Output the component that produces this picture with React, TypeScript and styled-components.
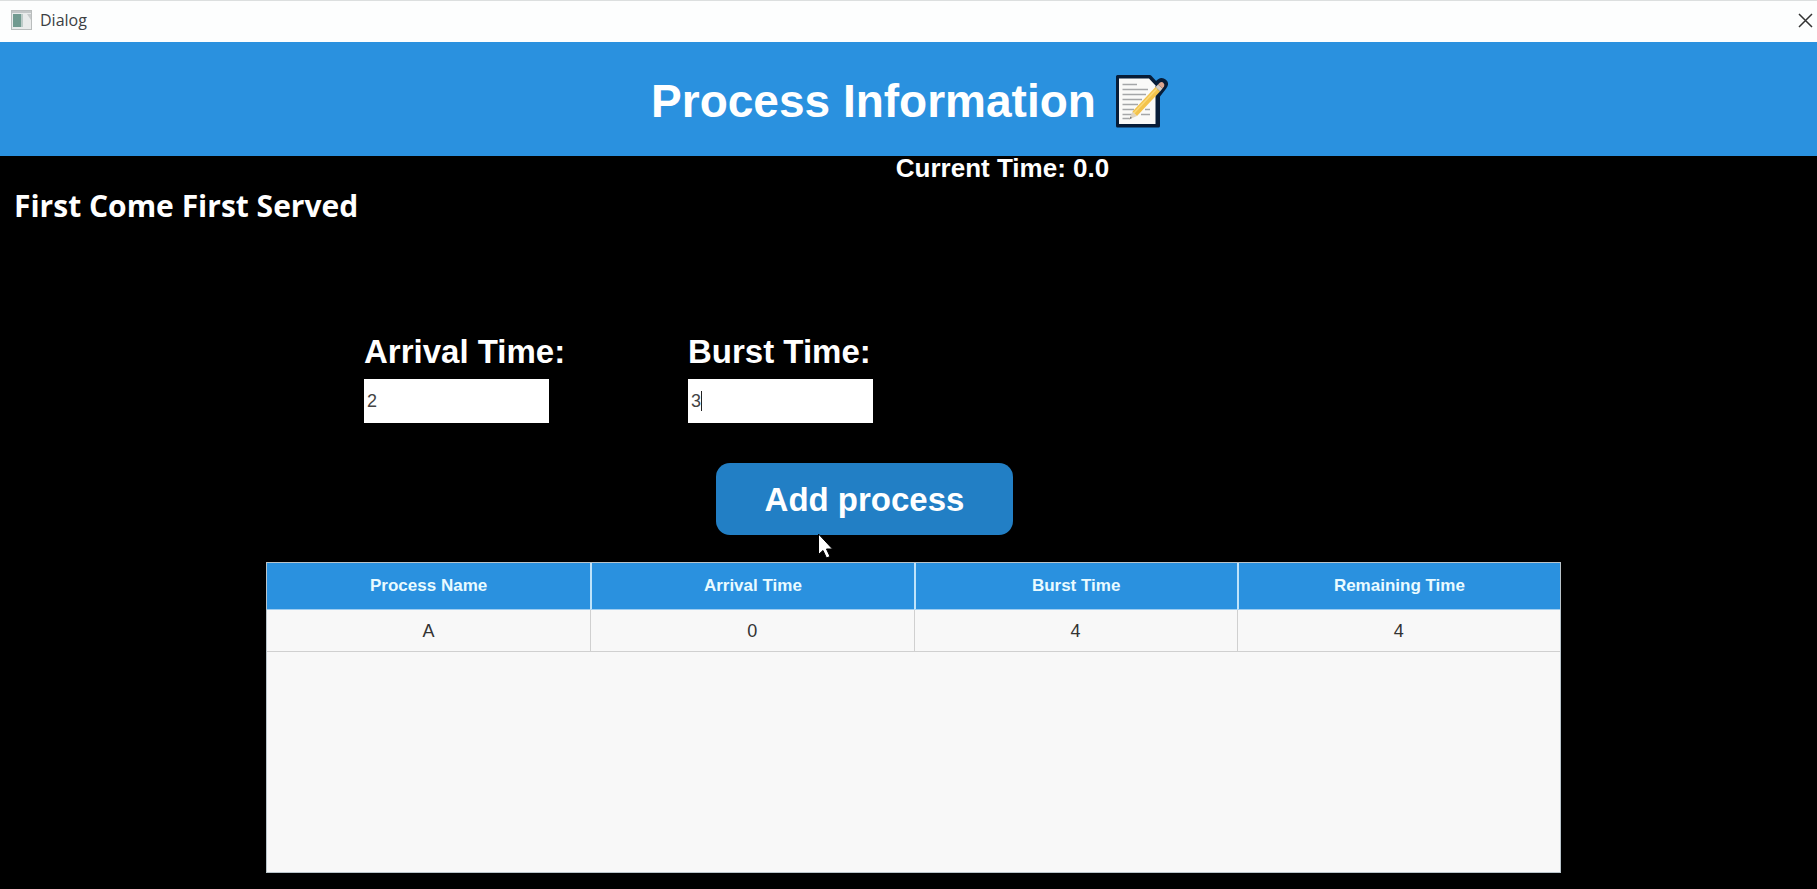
import React, { useState } from "react";
import styled, { createGlobalStyle } from "styled-components";

const GlobalStyle = createGlobalStyle`
  *, *::before, *::after { box-sizing: border-box; }
  body {
    margin: 0;
    background: #000;
    font-family: "Liberation Sans", Arial, sans-serif;
  }
`;

const Dialog = styled.div`
  display: flex;
  flex-direction: column;
  min-height: 100vh;
  background: #000;
  color: #fff;
`;

const TitleBar = styled.div`
  display: flex;
  align-items: center;
  height: 42px;
  padding: 0 4px 3px 11px;
  border-top: 1px solid #dcdfdf;
  background: #fdfefe;
  color: #3c4043;
`;

const WindowTitle = styled.span`
  flex: 1;
  margin-left: 7px;
  font-family: "Open Sans", "Noto Sans", sans-serif;
  font-size: 16px;
  line-height: 20px;
`;

const CloseButton = styled.button`
  display: flex;
  padding: 0;
  border: 0;
  background: none;
  color: #333;
`;

const Banner = styled.header`
  display: flex;
  align-items: center;
  justify-content: center;
  gap: 19px;
  height: 114px;
  padding: 4px 0 0 2px;
  background: #2a91df;
`;

const BannerTitle = styled.h1`
  margin: 0;
  font-size: 46px;
  line-height: 56px;
`;

const Main = styled.main`
  display: flex;
  flex: 1;
  flex-direction: column;
`;

const Clock = styled.p`
  margin: 0;
  padding-left: 188px;
  font-size: 26px;
  font-weight: 700;
  line-height: 24px;
  text-align: center;
`;

const Algorithm = styled.h2`
  margin: 6px 0 0 14px;
  font-family: "Open Sans", "Noto Sans", sans-serif;
  font-size: 30px;
  font-weight: 700;
  line-height: 40px;
`;

const Form = styled.form`
  display: flex;
  flex-direction: column;
  margin-top: 106px;
`;

const Fields = styled.div`
  display: grid;
  grid-template-columns: 364fr 324fr 324fr 805fr;
`;

const Field = styled.div`
  display: flex;
  flex-direction: column;
  align-items: flex-start;
  gap: 7px;

  &:first-child {
    grid-column-start: 2;
  }
`;

const FieldLabel = styled.label`
  font-size: 33px;
  font-weight: 700;
  line-height: 40px;
  white-space: nowrap;
`;

const InputWrap = styled.div<{ $caret?: boolean }>`
  position: relative;
  width: 185px;

  &::after {
    content: "";
    display: ${(p) => (p.$caret ? "block" : "none")};
    position: absolute;
    top: 12px;
    left: 13px;
    width: 1px;
    height: 20px;
    background: #222;
  }
`;

const TextInput = styled.input`
  display: block;
  width: 100%;
  height: 44px;
  padding: 1px 3px 0;
  border: 0;
  outline: 0;
  background: #fff;
  color: #444;
  caret-color: transparent;
  font-family: inherit;
  font-size: 18px;
`;

const Actions = styled.div`
  display: flex;
  justify-content: center;
  margin-top: 40px;
  padding-right: 88px;
`;

const AddButton = styled.button`
  position: relative;
  width: 297px;
  height: 72px;
  padding: 2px 0 0;
  border: 0;
  border-radius: 14px;
  background: #227fc5;
  color: #fff;
  font-family: inherit;
  font-size: 33px;
  font-weight: 700;
  line-height: 40px;
`;

const Pointer = styled.svg`
  position: absolute;
  top: 70px;
  left: 101px;
  pointer-events: none;
`;

const TablePanel = styled.section`
  flex: 1;
  min-height: 220px;
  margin: 27px 256px 16px 266px;
  border: 1px solid #b9c4ca;
  background: #f8f8f8;
`;

const ProcessTable = styled.table`
  width: 100%;
  border-collapse: separate;
  border-spacing: 0;
  table-layout: fixed;
`;

const HeadCell = styled.th`
  height: 47px;
  padding: 0;
  border-left: 2px solid #bfe3fa;
  border-bottom: 1px solid #9fcdf0;
  background: #2a91df;
  color: #e9fbff;
  font-size: 17px;
  line-height: 20px;

  &:first-child {
    border-left: 0;
  }
`;

const Cell = styled.td`
  height: 42px;
  padding: 0;
  border-left: 1px solid #d0d0d0;
  border-bottom: 1px solid #d0d0d0;
  color: #333;
  font-size: 18px;
  line-height: 20px;
  text-align: center;

  &:first-child {
    border-left: 0;
  }
`;

const WindowIcon = () => (
  <svg width="22" height="20" viewBox="0 0 22 20" aria-hidden="true">
    <rect x="0.5" y="0.5" width="20" height="19" fill="#e9ebeb" stroke="#b9bdbd" />
    <rect x="1" y="1" width="19" height="2" fill="#c3c7c8" />
    <rect x="2" y="4" width="8" height="13" fill="#719a90" />
    <rect x="10" y="4" width="2" height="13" fill="#bccbc8" />
    <path d="M16 4h4v6z" fill="#c6cacb" />
  </svg>
);

const CloseIcon = () => (
  <svg width="15" height="15" viewBox="0 0 15 15" aria-hidden="true">
    <path d="M1 1l13 13M14 1L1 14" stroke="currentColor" strokeWidth="1.5" fill="none" />
  </svg>
);

const MemoIcon = () => (
  <svg width="53" height="53" viewBox="0 0 53 53" aria-hidden="true">
    <path
      d="M2.5 1.5H35L41 8 44 5.5Q47 3.5 50 6T50 12.500L43.500 21V51H2.500z"
      fill="#071d38"
      stroke="#071d38"
      strokeWidth="3"
      strokeLinejoin="round"
    />
    <path d="M4 3.500H34L40.500 10.500V49H4z" fill="#fafaf8" />
    <path
      d="M7.500 9.500H22M7.500 14.500H33M7.500 19.500H31M7.500 24.500H27M7.500 29.500H23M7.500 34.500H19M30 34.500H35M7.500 39.500H17M26 39.500H35M7.500 43.500H14"
      stroke="#a5a7a8"
      strokeWidth="1.500"
    />
    <path d="M14 44.500L17.500 36.500 22 41z" fill="#dfd5c3" />
    <path d="M14 44.500L15.500 41.500 17 43z" fill="#777" />
    <path d="M17.500 36.500L40.500 12 45 16.500 22 41z" fill="#f3c34c" />
    <path d="M19 38L42 13.500" stroke="#fad979" strokeWidth="1.500" />
    <path d="M40.500 12L43 9.500 47.500 13.500 45 16.500z" fill="#d5cec6" />
    <path d="M43 9.500L45 7.500Q47 6.500 48.500 8T49 11.500L47.500 13.500z" fill="#dda58f" />
  </svg>
);

const COLUMNS = ["Process Name", "Arrival Time", "Burst Time", "Remaining Time"];
const ROWS = [["A", "0", "4", "4"]];

export default function App() {
  const [arrival, setArrival] = useState("2");
  const [burst, setBurst] = useState("3");

  return (
    <Dialog>
      <GlobalStyle />
      <TitleBar>
        <WindowIcon />
        <WindowTitle>Dialog</WindowTitle>
        <CloseButton type="button" aria-label="Close">
          <CloseIcon />
        </CloseButton>
      </TitleBar>
      <Banner>
        <BannerTitle>Process Information</BannerTitle>
        <MemoIcon />
      </Banner>
      <Main>
        <Clock>Current Time: 0.0</Clock>
        <Algorithm>First Come First Served</Algorithm>
        <Form onSubmit={(e) => e.preventDefault()}>
          <Fields>
            <Field>
              <FieldLabel htmlFor="arrival">Arrival Time:</FieldLabel>
              <InputWrap>
                <TextInput id="arrival" value={arrival} onChange={(e) => setArrival(e.target.value)} />
              </InputWrap>
            </Field>
            <Field>
              <FieldLabel htmlFor="burst">Burst Time:</FieldLabel>
              <InputWrap $caret>
                <TextInput id="burst" value={burst} onChange={(e) => setBurst(e.target.value)} />
              </InputWrap>
            </Field>
          </Fields>
          <Actions>
            <AddButton type="submit">
              Add process
              <Pointer width="17" height="26" viewBox="0 0 17 26" aria-hidden="true">
                <path
                  d="M1.500 1V21.500L6 17.500 9.500 25 13 23.500 9.500 16H15.500z"
                  fill="#fff"
                  stroke="#000"
                  strokeWidth="1"
                />
              </Pointer>
            </AddButton>
          </Actions>
        </Form>
        <TablePanel>
          <ProcessTable>
            <thead>
              <tr>
                {COLUMNS.map((name) => (
                  <HeadCell key={name} scope="col">
                    {name}
                  </HeadCell>
                ))}
              </tr>
            </thead>
            <tbody>
              {ROWS.map((row) => (
                <tr key={row[0]}>
                  {row.map((value, i) => (
                    <Cell key={COLUMNS[i]}>{value}</Cell>
                  ))}
                </tr>
              ))}
            </tbody>
          </ProcessTable>
        </TablePanel>
      </Main>
    </Dialog>
  );
}
